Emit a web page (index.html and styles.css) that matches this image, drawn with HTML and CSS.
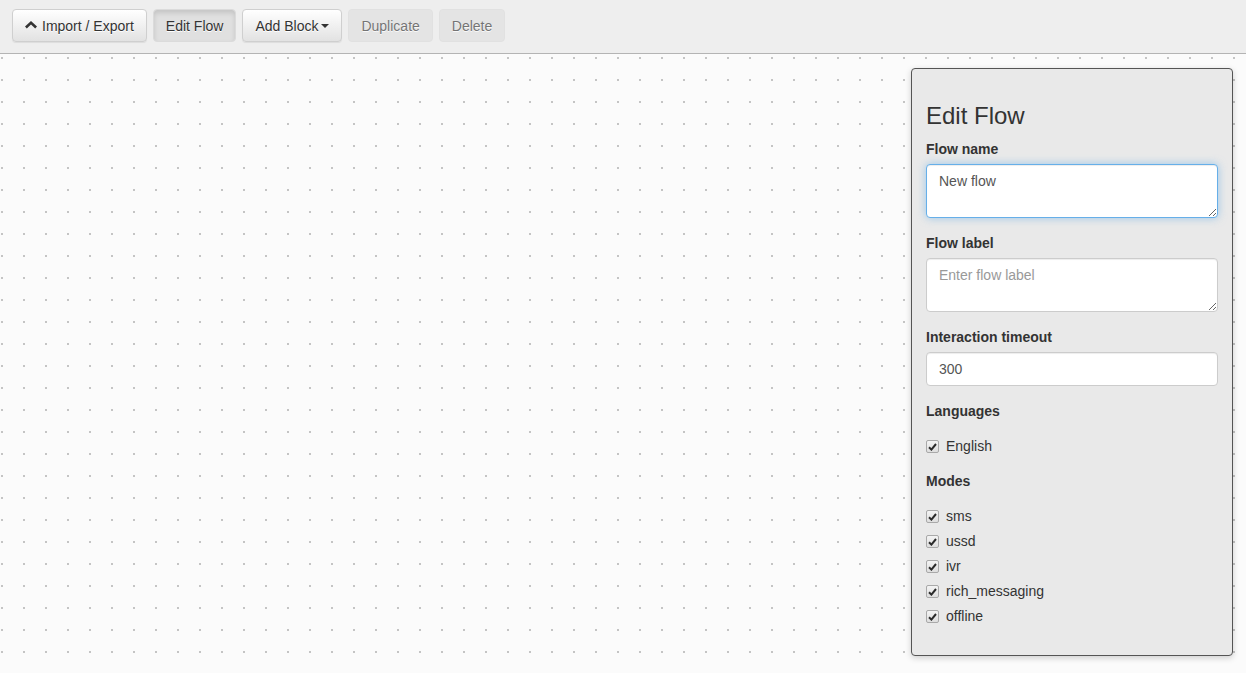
FILE: index.html
```html
<!DOCTYPE html>
<html>
<head>
<meta charset="utf-8">
<link rel="stylesheet" href="styles.css">
</head>
<body>
<div class="app">
  <div class="toolbar">
    <button class="btn"><svg class="chev" width="12" height="8" viewBox="0 0 12 8"><polygon points="6,0 12,5.6 10.2,7.4 6,3.6 1.8,7.4 0,5.6" fill="#333"/></svg> Import / Export</button>
    <button class="btn active">Edit Flow</button>
    <button class="btn">Add Block <span class="caret"></span></button>
    <button class="btn disabled">Duplicate</button>
    <button class="btn disabled">Delete</button>
  </div>
  <div class="canvas">
    <div class="panel">
      <h3 class="title">Edit Flow</h3>
      <div class="form-group">
        <label class="lbl">Flow name</label>
        <textarea class="control focus" rows="2">New flow</textarea>
      </div>
      <div class="form-group">
        <label class="lbl">Flow label</label>
        <textarea class="control" rows="2" placeholder="Enter flow label"></textarea>
      </div>
      <div class="form-group">
        <label class="lbl">Interaction timeout</label>
        <input class="control input" type="text" value="300">
      </div>
      <div class="form-group">
        <label class="lbl">Languages</label>
        <div class="checks">
          <div class="check"><span class="cb"><svg width="9" height="8" viewBox="0 0 9 8"><path d="M1 4.2 L3.4 6.6 L8 1" stroke="#2b2b2b" stroke-width="2" fill="none"/></svg></span>English</div>
        </div>
      </div>
      <div class="form-group">
        <label class="lbl">Modes</label>
        <div class="checks">
          <div class="check"><span class="cb"><svg width="9" height="8" viewBox="0 0 9 8"><path d="M1 4.2 L3.4 6.6 L8 1" stroke="#2b2b2b" stroke-width="2" fill="none"/></svg></span>sms</div>
          <div class="check"><span class="cb"><svg width="9" height="8" viewBox="0 0 9 8"><path d="M1 4.2 L3.4 6.6 L8 1" stroke="#2b2b2b" stroke-width="2" fill="none"/></svg></span>ussd</div>
          <div class="check"><span class="cb"><svg width="9" height="8" viewBox="0 0 9 8"><path d="M1 4.2 L3.4 6.6 L8 1" stroke="#2b2b2b" stroke-width="2" fill="none"/></svg></span>ivr</div>
          <div class="check"><span class="cb"><svg width="9" height="8" viewBox="0 0 9 8"><path d="M1 4.2 L3.4 6.6 L8 1" stroke="#2b2b2b" stroke-width="2" fill="none"/></svg></span>rich_messaging</div>
          <div class="check"><span class="cb"><svg width="9" height="8" viewBox="0 0 9 8"><path d="M1 4.2 L3.4 6.6 L8 1" stroke="#2b2b2b" stroke-width="2" fill="none"/></svg></span>offline</div>
        </div>
      </div>
    </div>
  </div>
</div>
</body>
</html>
```
FILE: styles.css
```css
* { box-sizing: border-box; }
html, body { margin: 0; padding: 0; height: 100%; }
body {
  font-family: "Liberation Sans", Arial, Helvetica, sans-serif;
  font-size: 14px;
  line-height: 20px;
  color: #333;
  background: #fbfbfb;
  overflow: hidden;
}
.app { display: flex; flex-direction: column; height: 100%; }
.toolbar {
  display: flex;
  align-items: flex-start;
  gap: 6px;
  height: 54px;
  padding: 9px 12px 0;
  background: #eeeeee;
  border-bottom: 1px solid #b4b4b4;
  flex: none;
}
.btn {
  font-family: inherit;
  font-size: 14px;
  line-height: 20px;
  padding: 6px 12px;
  height: 33px;
  border: 1px solid #cfcfcf;
  border-radius: 4px;
  color: #333;
  background: linear-gradient(to bottom, #ffffff 0%, #e2e2e2 100%);
  text-shadow: 0 1px 0 #fff;
  box-shadow: inset 0 1px 0 rgba(255,255,255,.15), 0 1px 1px rgba(0,0,0,.075);
  display: inline-flex;
  align-items: center;
  cursor: pointer;
}
.btn .chev { margin-right: 5px; margin-top: -1px; }
.btn.active {
  background: #e0e0e0;
  border-color: #dbdbdb;
  box-shadow: inset 0 3px 5px rgba(0,0,0,.125);
}
.btn.disabled {
  background: #e0e0e0;
  border-color: #dbdbdb;
  box-shadow: none;
  opacity: .65;
}
.caret {
  display: inline-block;
  width: 0; height: 0;
  margin-left: 3px;
  border-top: 4px solid #333;
  border-left: 4px solid transparent;
  border-right: 4px solid transparent;
}
.canvas {
  position: relative;
  flex: 1;
  background-color: #fbfbfb;
  background-image: radial-gradient(circle at 2px 2px, #c4c4c4 0, #c4c4c4 1px, transparent 1.4px);
  background-size: 22px 22px;
  background-position: 0 2px;
}
.panel {
  position: absolute;
  left: 911px;
  top: 14px;
  width: 322px;
  padding: 14px 14px 14px;
  background: #e9e9e9;
  border: 1px solid #555;
  border-radius: 4px;
  box-shadow: 0 2px 6px rgba(0,0,0,.18);
}
.title {
  font-size: 24px;
  font-weight: 500;
  line-height: 26.4px;
  margin: 20px 0 10px;
  color: #333;
}
.form-group { margin-bottom: 15px; }
.lbl {
  display: block;
  font-weight: bold;
  margin-bottom: 5px;
}
.control {
  display: block;
  width: 100%;
  font-family: inherit;
  font-size: 14px;
  line-height: 20px;
  padding: 6px 12px;
  color: #555;
  background: #fff;
  border: 1px solid #ccc;
  border-radius: 4px;
  box-shadow: inset 0 1px 1px rgba(0,0,0,.075);
  margin: 0;
}
textarea.control { height: 54px; resize: vertical; }
.control.input { height: 34px; }
.control.focus {
  border-color: #66afe9;
  outline: 0;
  box-shadow: inset 0 1px 1px rgba(0,0,0,.075), 0 0 8px rgba(102,175,233,.6);
}
.control::placeholder { color: #999; }
.checks {
  display: flex;
  flex-direction: column;
  gap: 5px;
  padding: 10px 0 0;
}
.check {
  display: flex;
  align-items: center;
  height: 20px;
  color: #333;
}
.cb {
  width: 13px;
  height: 13px;
  margin-right: 7px;
  margin-top: 1px;
  border: 1px solid #a9a9a9;
  border-radius: 2px;
  background: linear-gradient(#f4f4f4, #dedede);
  display: flex;
  align-items: center;
  justify-content: center;
}
.cb svg { display: block; }
```
